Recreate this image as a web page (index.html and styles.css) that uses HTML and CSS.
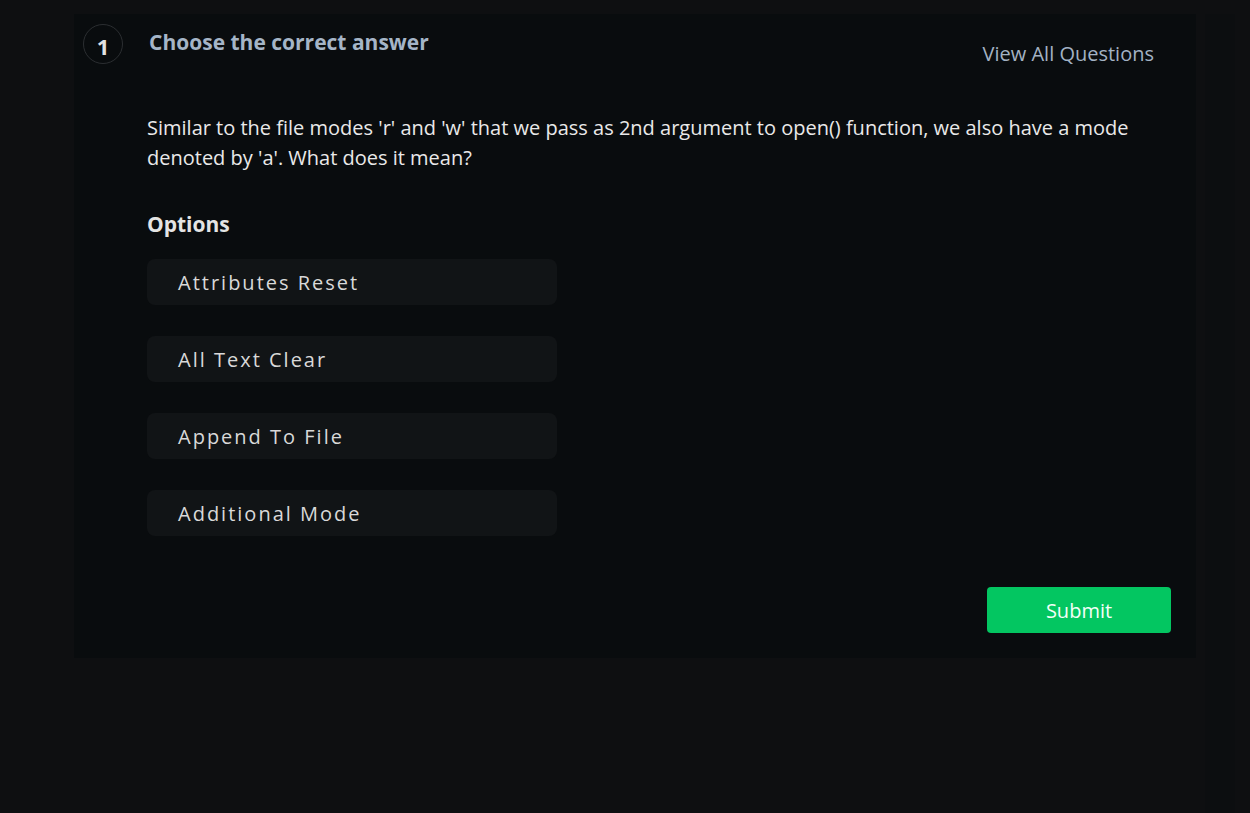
FILE: index.html
```html
<!DOCTYPE html>
<html>
<head>
<meta charset="utf-8">
<link rel="stylesheet" href="styles.css">
</head>
<body>
<div class="page">
  <main class="card">
    <header class="head">
      <div class="num">1</div>
      <h1 class="title">Choose the correct answer</h1>
      <a class="view-all">View All Questions</a>
    </header>
    <section class="body">
      <p class="question">Similar to the file modes 'r' and 'w' that we pass as 2nd argument to open() function, we also have a mode denoted by 'a'. What does it mean?</p>
      <h2 class="options-title">Options</h2>
      <div class="options">
        <div class="option">Attributes Reset</div>
        <div class="option">All Text Clear</div>
        <div class="option">Append To File</div>
        <div class="option">Additional Mode</div>
      </div>
      <div class="actions">
        <button class="submit">Submit</button>
      </div>
    </section>
  </main>
  <aside class="side"></aside>
</div>
</body>
</html>
```
FILE: styles.css
```css
* { box-sizing: border-box; }
html, body { margin: 0; padding: 0; }
body {
  background: #0e0f11;
  font-family: "Open Sans", Lato, sans-serif;
  color: #e6e6e6;
  width: 1250px;
  height: 813px;
  overflow: hidden;
}
.page {
  display: flex;
  padding: 14px 0 0 74px;
  gap: 9px;
}
.card {
  width: 1122px;
  height: 644px;
  background: #090c0e;
  padding: 10px 25px 0 9px;
  display: flex;
  flex-direction: column;
}
.head {
  display: flex;
  align-items: flex-start;
}
.num {
  width: 40px;
  height: 40px;
  border-radius: 50%;
  border: 1px solid #2b2e31;
  display: flex;
  align-items: center;
  justify-content: center;
  font-size: 22px;
  font-weight: 700;
  color: #e2e2e2;
  padding-top: 3px;
  flex-shrink: 0;
}
.title {
  margin: 4px 0 0 26px;
  font-size: 21px;
  line-height: 28px;
  font-weight: 700;
  color: #a5b5c7;
  flex: 1;
}
.view-all {
  margin-top: 16px;
  font-size: 20px;
  line-height: 28px;
  color: #a3b2c3;
  margin-right: 17px;
}
.body {
  padding-left: 64px;
  display: flex;
  flex-direction: column;
}
.question {
  margin: 45px 0 0 0;
  font-size: 20px;
  line-height: 30px;
  color: #e9e9e9;
  width: 1000px;
}
.options-title {
  margin: 36px 0 0 0;
  font-size: 21px;
  line-height: 30px;
  font-weight: 700;
  color: #e4e4e4;
}
.options {
  margin-top: 20px;
  display: flex;
  flex-direction: column;
  gap: 31px;
}
.option {
  width: 410px;
  height: 46px;
  background: #111416;
  border-radius: 8px;
  padding-left: 31px;
  display: flex;
  align-items: center;
  font-size: 20px;
  letter-spacing: 2px;
  color: #d9d9d9;
}
.actions {
  display: flex;
  justify-content: flex-end;
  margin-top: 51px;
}
.submit {
  width: 184px;
  height: 46px;
  background: #03c661;
  border: none;
  border-radius: 4px;
  color: #f2fff7;
  font-family: inherit;
  font-size: 20px;
}
.side {
  width: 30px;
  height: 813px;
  background: #0c0e10;
}
```
